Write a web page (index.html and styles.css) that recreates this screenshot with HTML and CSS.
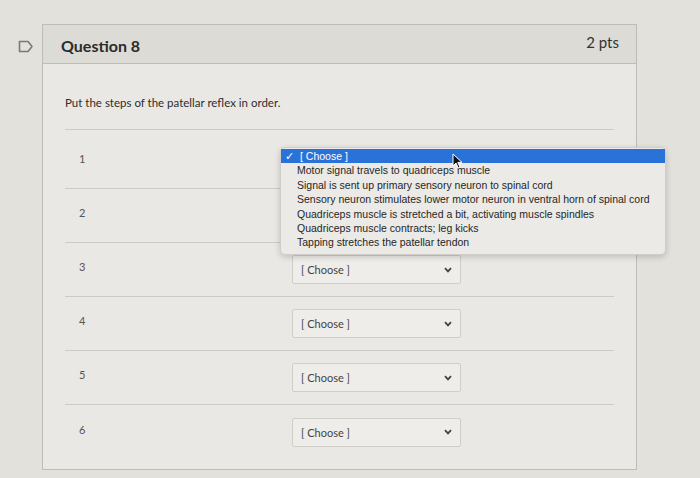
FILE: index.html
```html
<!DOCTYPE html>
<html>
<head>
<meta charset="utf-8">
<link rel="stylesheet" href="styles.css">
</head>
<body>
<div class="page">
  <svg class="flag" width="16" height="13" viewBox="0 0 16 13"><path d="M1.5 1.5 H10 L14 6.5 L10 11.5 H1.5 Z" fill="none" stroke="#7a7a78" stroke-width="1.6" stroke-linejoin="round"/></svg>
  <div class="card">
    <div class="card-head">
      <span class="title">Question 8</span>
      <span class="pts">2 pts</span>
    </div>
    <div class="card-body">
      <p class="prompt">Put the steps of the patellar reflex in order.</p>
      <div class="list">
        <div class="item"><span class="num">1</span><div class="select covered"><span>[ Choose ]</span><svg class="chev" width="8" height="6" viewBox="0 0 8 6"><path d="M1 1.2 L4 4.4 L7 1.2" fill="none" stroke="#444" stroke-width="1.8"/></svg></div></div>
        <div class="item"><span class="num">2</span><div class="select covered"><span>[ Choose ]</span><svg class="chev" width="8" height="6" viewBox="0 0 8 6"><path d="M1 1.2 L4 4.4 L7 1.2" fill="none" stroke="#444" stroke-width="1.8"/></svg></div></div>
        <div class="item"><span class="num">3</span><div class="select"><span>[ Choose ]</span><svg class="chev" width="8" height="6" viewBox="0 0 8 6"><path d="M1 1.2 L4 4.4 L7 1.2" fill="none" stroke="#444" stroke-width="1.8"/></svg></div></div>
        <div class="item"><span class="num">4</span><div class="select"><span>[ Choose ]</span><svg class="chev" width="8" height="6" viewBox="0 0 8 6"><path d="M1 1.2 L4 4.4 L7 1.2" fill="none" stroke="#444" stroke-width="1.8"/></svg></div></div>
        <div class="item"><span class="num">5</span><div class="select"><span>[ Choose ]</span><svg class="chev" width="8" height="6" viewBox="0 0 8 6"><path d="M1 1.2 L4 4.4 L7 1.2" fill="none" stroke="#444" stroke-width="1.8"/></svg></div></div>
        <div class="item"><span class="num">6</span><div class="select"><span>[ Choose ]</span><svg class="chev" width="8" height="6" viewBox="0 0 8 6"><path d="M1 1.2 L4 4.4 L7 1.2" fill="none" stroke="#444" stroke-width="1.8"/></svg></div></div>
      </div>
    </div>
  </div>
</div>
<ul class="menu">
  <li class="selected"><span class="check">✓</span>[ Choose ]</li>
  <li>Motor signal travels to quadriceps muscle</li>
  <li>Signal is sent up primary sensory neuron to spinal cord</li>
  <li>Sensory neuron stimulates lower motor neuron in ventral horn of spinal cord</li>
  <li>Quadriceps muscle is stretched a bit, activating muscle spindles</li>
  <li>Quadriceps muscle contracts; leg kicks</li>
  <li>Tapping stretches the patellar tendon</li>
</ul>
<svg class="cursor" width="11" height="16" viewBox="0 0 11 16"><path d="M1 1 L1 13 L4 10 L6.2 15 L8 14.2 L5.8 9.4 L10 9.4 Z" fill="#111" stroke="#fff" stroke-width="1"/></svg>
</body>
</html>
```
FILE: styles.css
```css
html, body {
  margin: 0;
  padding: 0;
}
body {
  width: 700px;
  height: 478px;
  overflow: hidden;
  background: #e2e1dc;
  font-family: Lato, "Open Sans", sans-serif;
  color: #2d2d2d;
  position: relative;
}
.page {
  display: flex;
  align-items: flex-start;
  gap: 8px;
  padding: 24px 0 0 18px;
}
.flag {
  margin-top: 16px;
  flex: none;
}
.card {
  width: 595px;
  height: 446px;
  box-sizing: border-box;
  border: 1px solid #bdbcb7;
  background: #e9e8e4;
  display: flex;
  flex-direction: column;
}
.card-head {
  height: 38px;
  background: #dcdbd6;
  border-bottom: 1px solid #bdbcb7;
  display: flex;
  align-items: center;
  justify-content: space-between;
  padding: 0 17px 0 18px;
}
.title {
  font-size: 16px;
  font-weight: 700;
  color: #2b2b2b;
  margin-top: 2px;
}
.pts {
  font-size: 15px;
  color: #333;
  margin-top: -4px;
}
.card-body {
  padding: 0 22px 0 22px;
}
.prompt {
  margin: 0;
  padding-top: 31px;
  padding-bottom: 18px;
  font-size: 11.5px;
  line-height: 16px;
  color: #2d2d2d;
  border-bottom: 1px solid #cccbc6;
}
.list {
  padding-top: 5px;
}
.item {
  height: 54px;
  box-sizing: border-box;
  display: grid;
  grid-template-columns: 227px 169px;
  align-items: center;
  border-bottom: 1px solid #cccbc6;
}
.item:last-child {
  border-bottom: none;
}
.num {
  padding-left: 14px;
  font-size: 11px;
  color: #555;
  margin-top: -6px;
}
.select {
  height: 29px;
  box-sizing: border-box;
  border: 1px solid #cfcec9;
  border-radius: 2px;
  background: #eeede9;
  display: flex;
  align-items: center;
  justify-content: space-between;
  padding: 0 8px 0 8px;
  font-size: 11px;
  color: #444;
}
.select.covered span {
  visibility: hidden;
}
.chev {
  display: block;
}
.menu {
  position: absolute;
  left: 280px;
  top: 147px;
  width: 384px;
  margin: 0;
  padding: 1px 0 4px 0;
  list-style: none;
  background: #ebeae6;
  border: 1px solid #cfcec9;
  border-radius: 5px;
  box-shadow: 0 2px 6px rgba(0,0,0,0.18);
  font-family: "Liberation Sans", Arial, sans-serif;
  font-size: 10.5px;
  color: #262626;
}
.menu li {
  height: 14.4px;
  line-height: 14.4px;
  padding-left: 16px;
  white-space: nowrap;
  position: relative;
}
.menu li.selected {
  background: #2a72d8;
  color: #fff;
  padding-left: 19px;
}
.check {
  position: absolute;
  left: 4px;
  top: 0;
}
.cursor {
  position: absolute;
  left: 452px;
  top: 153px;
}
```
